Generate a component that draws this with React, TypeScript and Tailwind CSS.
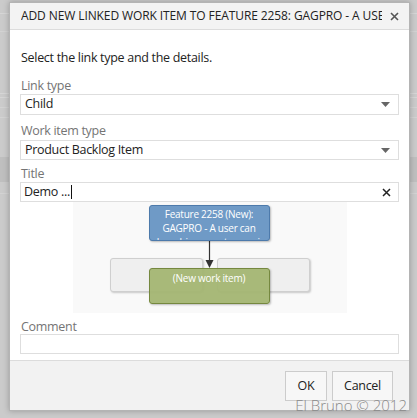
import React from "react";

const font = { fontFamily: '"Open Sans", "Noto Sans", sans-serif' };

function Select({ value, h }: { value: string; h: string }) {
  return (
    <div className={`${h} bg-white border border-[#dedede] flex items-center justify-between pl-[4px] pr-[8px]`}>
      <span className="text-[12.5px] tracking-[-0.3px] text-[#222] leading-none">{value}</span>
      <svg width="9" height="5" viewBox="0 0 9 5">
        <path d="M0 0 H9 L4.5 5 Z" fill="#666" />
      </svg>
    </div>
  );
}

const label = "text-[12.5px] tracking-[-0.3px] text-[#747474] pl-[1px]";

export default function App() {
  return (
    <div className="w-[417px] h-[418px] bg-[#cbcbcb] relative overflow-hidden" style={font}>
      {/* background page behind the modal */}
      <div className="flex flex-col w-full">
        <div className="h-[13px]" />
        <div className="h-[18px] border-t border-[#d6d6d6]" />
        <div className="h-[62px] border-t border-[#d3d3d3]" />
        <div className="h-[4px] border-t border-[#d6d6d6]" />
        <div className="h-[10px] border-t border-[#d6d6d6]" />
        <div className="h-[10px] border-t border-[#d3d3d3]" />
        <div className="h-[40px] border-t border-[#d3d3d3]" />
        <div className="h-[25px] bg-[#bfbfbf]" />
        <div className="h-[11px]" />
        <div className="h-[20px] border-t border-[#d3d3d3]" />
      </div>

      {/* modal dialog */}
      <div className="absolute left-[9px] top-[2px] w-[401px] h-[409px] border border-[#b4b4b4] bg-white flex flex-col shadow-[0_0_6px_rgba(0,0,0,0.25)]">
        <div className="h-[27px] shrink-0 bg-[#f3f3f3] border-b border-[#dcdcdc] flex items-center pl-[11px] pr-[10px]">
          <div className="w-[361px] overflow-hidden whitespace-nowrap text-[12px] text-[#222] leading-none tracking-[-0.1px]">
            ADD NEW LINKED WORK ITEM TO FEATURE 2258: GAGPRO - A USER CAN SHARE HIS CURRENT SPACE
          </div>
          <div className="flex-1 flex justify-end">
            <svg width="9" height="9" viewBox="0 0 9 9">
              <path d="M1 1 L8 8 M8 1 L1 8" stroke="#555" strokeWidth="1.6" />
            </svg>
          </div>
        </div>

        <div className="flex-1 bg-white px-[10px] pt-[19px] flex flex-col">
          <div className="text-[12.5px] tracking-[-0.3px] leading-[18px] text-[#222] pl-[1px]">
            Select the link type and the details.
          </div>

          <div className={`mt-[11px] leading-[16px] ${label}`}>Link type</div>
          <Select value="Child" h="h-[21px]" />

          <div className={`mt-[8px] leading-[16px] ${label}`}>Work item type</div>
          <div className="mt-[1px]">
            <Select value="Product Backlog Item" h="h-[20px]" />
          </div>

          <div className={`mt-[6px] leading-[16px] ${label}`}>Title</div>
          <div className="h-[20px] bg-white border border-[#dedede] flex items-center justify-between pl-[3px] pr-[7px]">
            <span className="text-[12.5px] tracking-[-0.3px] text-[#222] leading-none flex items-center">
              Demo ...<span className="inline-block w-[1px] h-[14px] bg-[#111] ml-[1px]" />
            </span>
            <svg width="9" height="9" viewBox="0 0 9 9">
              <path d="M1 1 L8 8 M8 1 L1 8" stroke="#222" strokeWidth="1.5" />
            </svg>
          </div>

          {/* diagram */}
          <div className="self-center w-[274px] h-[111px] bg-[#f9f9f9] relative">
            <div className="absolute left-[37px] top-[56px] w-[93px] h-[34px] bg-[#efefef] border border-[#cfcfcf] rounded-[3px] shadow-[1px_1px_2px_rgba(0,0,0,0.2)]" />
            <div className="absolute left-[144px] top-[56px] w-[93px] h-[34px] bg-[#efefef] border border-[#cfcfcf] rounded-[3px] shadow-[1px_1px_2px_rgba(0,0,0,0.2)]" />
            <svg className="absolute left-[131px] top-[39px]" width="11" height="28" viewBox="0 0 11 28">
              <path d="M5.5 0 V20" stroke="#333" strokeWidth="1.2" />
              <path d="M1.5 19 H9.5 L5.5 27 Z" fill="#333" />
            </svg>
            <div className="absolute left-[76px] top-[3px] w-[121px] h-[36px] bg-[#6f9ac6] border border-[#4d7aab] rounded-[3px] overflow-hidden text-white text-[10px] tracking-[-0.25px] leading-[14px] text-center pt-[1px] shadow-[1px_1px_2px_rgba(0,0,0,0.25)]">
              <div className="whitespace-nowrap">Feature 2258 (New):</div>
              <div className="whitespace-nowrap">GAGPRO - A user can</div>
              <div className="whitespace-nowrap">share his current space in</div>
            </div>
            <div className="absolute left-[76px] top-[66px] w-[121px] h-[36px] bg-[#a3b572]/95 border border-[#75883f] rounded-[3px] text-white text-[10px] tracking-[-0.25px] leading-[14px] text-center pt-[2px] shadow-[1px_1px_2px_rgba(0,0,0,0.25)]">
              (New work item)
            </div>
          </div>

          <div className={`mt-[6px] leading-[15px] ${label}`}>Comment</div>
          <div className="h-[20px] bg-white border border-[#dedede]" />
        </div>

        <div className="h-[50px] shrink-0 bg-[#f2f2f2] border-t border-[#dcdcdc] flex items-start justify-end pt-[10px] pr-[16px] gap-[5px]">
          <button className="w-[42px] h-[30px] bg-[#f7f7f7] border border-[#cccccc] text-[12.5px] tracking-[-0.3px] text-[#222] flex items-center justify-center">
            OK
          </button>
          <button className="w-[61px] h-[30px] bg-[#f7f7f7] border border-[#cccccc] text-[12.5px] tracking-[-0.3px] text-[#222] flex items-center justify-center">
            Cancel
          </button>
        </div>
      </div>

      {/* watermark */}
      <div className="absolute right-[10px] top-[396px] text-[15px] font-light text-[#8a8a8a] leading-[18px] whitespace-nowrap">
        El Bruno © 2012
      </div>
    </div>
  );
}
